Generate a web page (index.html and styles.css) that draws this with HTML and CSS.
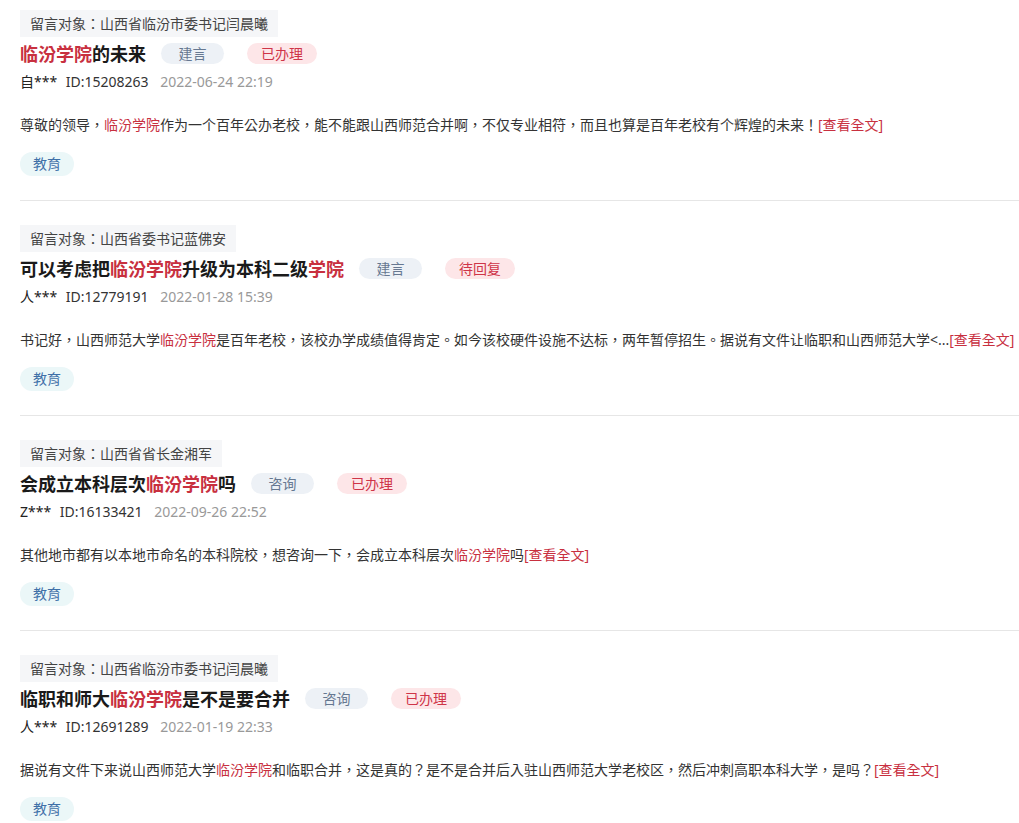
FILE: index.html
```html
<!DOCTYPE html>
<html lang="zh-TW">
<head>
  <meta charset="UTF-8" />
  <meta name="viewport" content="width=device-width, initial-scale=1.0" />
  <title>留言列表</title>
  <link rel="stylesheet" href="styles.css">
</head>
<body>
  <div class="list">
    <div class="item">
      <span class="target">留言对象：山西省临汾市委书记闫晨曦</span>
      <div class="title-row">
        <h3 class="title"><em>临汾学院</em>的未来</h3>
        <span class="pill pill-type">建言</span>
        <span class="pill pill-state">已办理</span>
      </div>
      <div class="meta">
        <span class="user">自***</span>
        <span class="msg-id">ID:15208263</span>
        <span class="date">2022-06-24 22:19</span>
      </div>
      <p class="content">尊敬的领导，<em>临汾学院</em>作为一个百年公办老校，能不能跟山西师范合并啊，不仅专业相符，而且也算是百年老校有个辉煌的未来！<a href="#">[查看全文]</a></p>
      <span class="cat">教育</span>
    </div>

    <div class="item">
      <span class="target">留言对象：山西省委书记蓝佛安</span>
      <div class="title-row">
        <h3 class="title">可以考虑把<em>临汾学院</em>升级为本科二级<em>学院</em></h3>
        <span class="pill pill-type">建言</span>
        <span class="pill pill-state">待回复</span>
      </div>
      <div class="meta">
        <span class="user">人***</span>
        <span class="msg-id">ID:12779191</span>
        <span class="date">2022-01-28 15:39</span>
      </div>
      <p class="content">书记好，山西师范大学<em>临汾学院</em>是百年老校，该校办学成绩值得肯定。如今该校硬件设施不达标，两年暂停招生。据说有文件让临职和山西师范大学&lt;...<a href="#">[查看全文]</a></p>
      <span class="cat">教育</span>
    </div>

    <div class="item">
      <span class="target">留言对象：山西省省长金湘军</span>
      <div class="title-row">
        <h3 class="title">会成立本科层次<em>临汾学院</em>吗</h3>
        <span class="pill pill-type">咨询</span>
        <span class="pill pill-state">已办理</span>
      </div>
      <div class="meta">
        <span class="user">Z***</span>
        <span class="msg-id">ID:16133421</span>
        <span class="date">2022-09-26 22:52</span>
      </div>
      <p class="content">其他地市都有以本地市命名的本科院校，想咨询一下，会成立本科层次<em>临汾学院</em>吗<a href="#">[查看全文]</a></p>
      <span class="cat">教育</span>
    </div>

    <div class="item">
      <span class="target">留言对象：山西省临汾市委书记闫晨曦</span>
      <div class="title-row">
        <h3 class="title">临职和师大<em>临汾学院</em>是不是要合并</h3>
        <span class="pill pill-type">咨询</span>
        <span class="pill pill-state">已办理</span>
      </div>
      <div class="meta">
        <span class="user">人***</span>
        <span class="msg-id">ID:12691289</span>
        <span class="date">2022-01-19 22:33</span>
      </div>
      <p class="content">据说有文件下来说山西师范大学<em>临汾学院</em>和临职合并，这是真的？是不是合并后入驻山西师范大学老校区，然后冲刺高职本科大学，是吗？<a href="#">[查看全文]</a></p>
      <span class="cat">教育</span>
    </div>
  </div>
</body>
</html>
```

FILE: styles.css
```css
body {
  margin: 0;
  background: #fff;
  color: #333;
  font-family: "Noto Sans", "Noto Sans CJK TC", sans-serif;
  font-size: 14px;
}

.list {
  margin-left: 20px;
}

.item {
  padding: 24px 0;
  border-bottom: 1px solid #e6e6e6;
}

.item:first-child {
  padding-top: 10px;
}

em {
  font-style: normal;
  color: #c8303f;
}

.target {
  display: inline-block;
  height: 27px;
  line-height: 27px;
  padding: 0 10px;
  background: #f5f6f8;
  color: #444;
}

.title-row {
  display: flex;
  align-items: center;
  height: 32px;
}

.title {
  margin: 0 15px 0 0;
  font-size: 18px;
  font-weight: bold;
  color: #1a1a1a;
}

.pill {
  display: inline-block;
  min-width: 35px;
  height: 21px;
  line-height: 21px;
  padding: 0 14px;
  border-radius: 11px;
  text-align: center;
  margin-right: 23px;
}

.pill-type {
  background: #edf1f6;
  color: #667891;
}

.pill-state {
  background: #fde6e8;
  color: #cf3548;
}

.meta {
  height: 26px;
  line-height: 26px;
}

.user {
  color: #222;
  margin-right: 5px;
}

.msg-id {
  color: #333;
  margin-right: 8px;
}

.date {
  color: #999;
}

.content {
  margin: 18px 0 0;
  line-height: 24px;
  color: #333;
  white-space: nowrap;
}

.content a {
  color: #c8303f;
  text-decoration: none;
}

.cat {
  display: inline-block;
  margin-top: 15px;
  height: 24px;
  line-height: 24px;
  padding: 0 13px;
  border-radius: 12px;
  background: #ebf7f8;
  color: #3f70a8;
}
```
